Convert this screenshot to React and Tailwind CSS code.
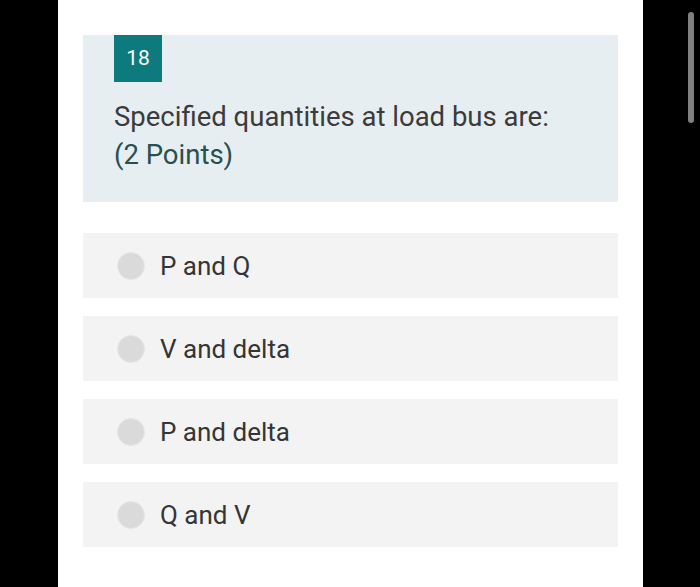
export default function App() {
  const options = ['P and Q', 'V and delta', 'P and delta', 'Q and V'];

  return (
    <div className="relative flex h-[587px] w-[700px] bg-black" style={{ fontFamily: 'Roboto, "Noto Sans", sans-serif' }}>
      <div className="ml-[58px] h-full w-[585px] bg-white px-[25px] pt-[35px]">
        <div className="h-[167px] bg-[#e7eef1] pl-[31px] pr-4">
          <div className="flex h-[47px] w-[48px] items-center justify-center bg-[#0d7a7d] text-[21px] text-white">
            18
          </div>
          <div className="mt-[16px] text-[27.5px] leading-[38px] text-[#3b3b3b]">
            Specified quantities at load bus are:
          </div>
          <div className="text-[27.5px] leading-[38px] text-[#27504f]">(2 Points)</div>
        </div>

        <div className="mt-[31px] flex flex-col gap-[18px]">
          {options.map((o) => (
            <div key={o} className="flex h-[65px] items-center bg-[#f3f3f3] pl-[34px]">
              <span className="h-[28px] w-[28px] rounded-full border border-[#e6e6e6] bg-[#dadada]" />
              <span className="ml-[15px] mt-[1px] text-[26px] text-[#353535]">{o}</span>
            </div>
          ))}
        </div>
      </div>

      <div className="absolute left-[688px] top-[12px] h-[111px] w-[6px] rounded-full bg-[#808080]" />
    </div>
  );
}
